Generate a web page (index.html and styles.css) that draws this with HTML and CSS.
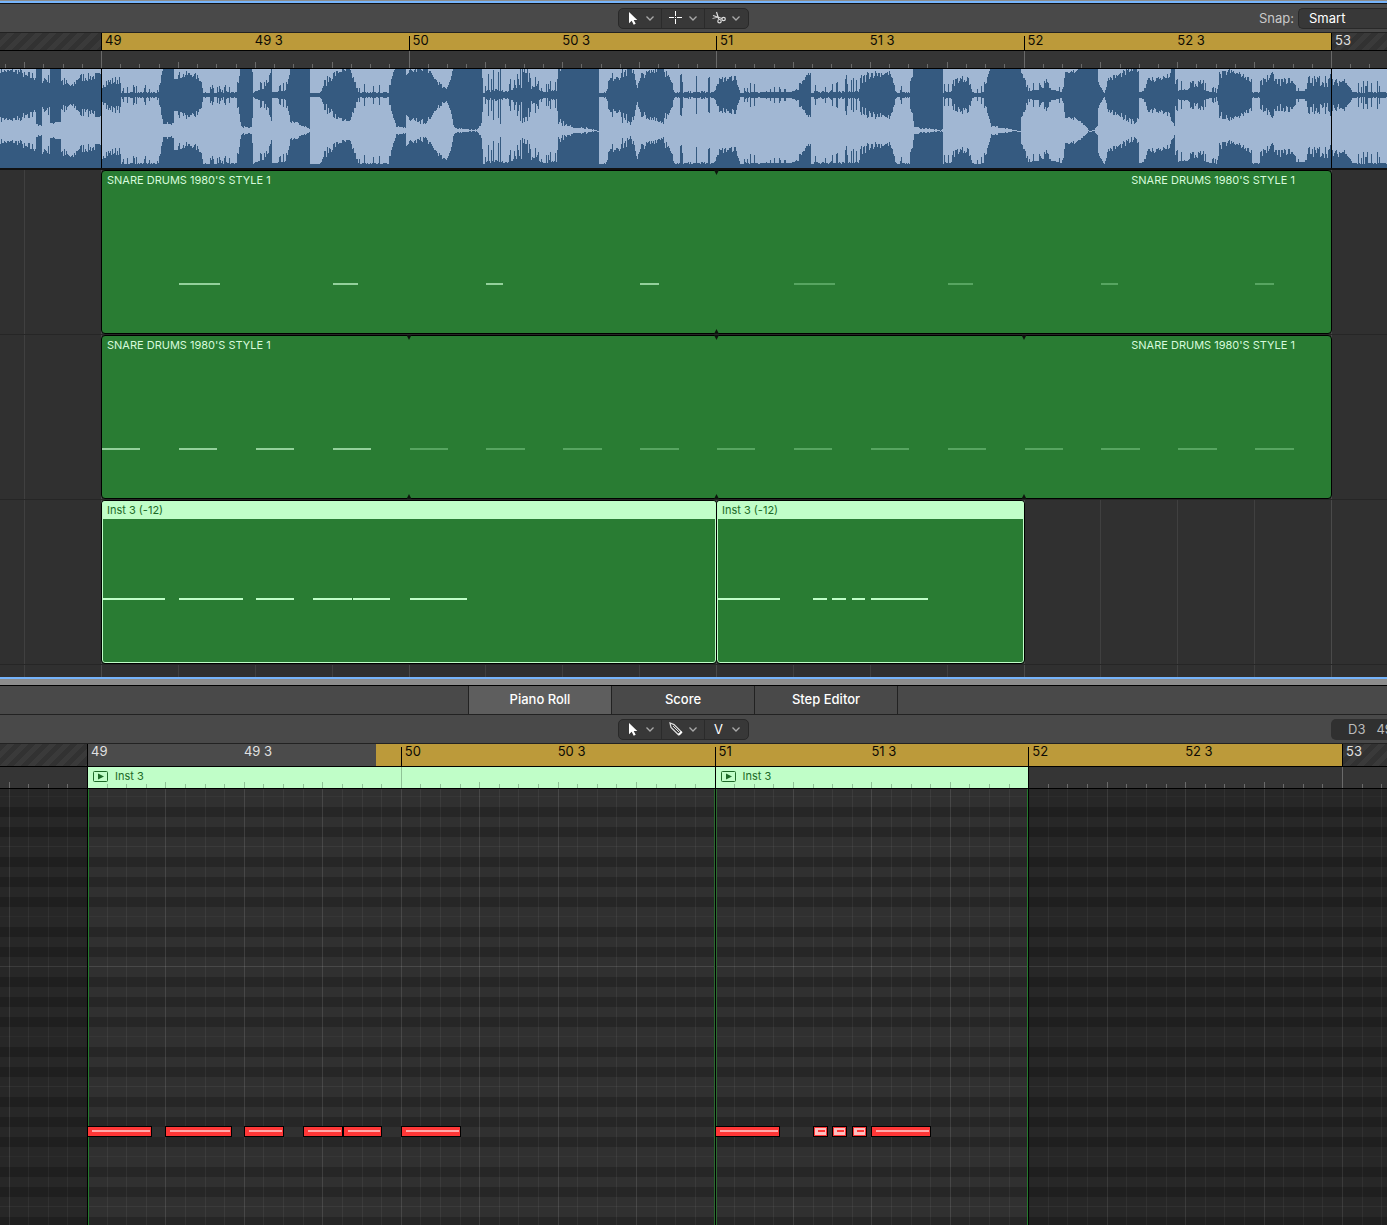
FILE: index.html
```html
<!DOCTYPE html>
<html lang="en">
<head>
<meta charset="utf-8">
<title>Tracks and Piano Roll</title>
<link rel="stylesheet" href="styles.css">
</head>
<body>
<svg class="defs" aria-hidden="true">
  <symbol id="pointer" viewBox="0 0 16 16"><path fill="#fff" d="M4 2v11.2l2.7-2.5 2 4 2-1-2-3.8h3.6z"/></symbol>
  <symbol id="marquee" viewBox="0 0 16 16"><path stroke="#fff" d="M7.500 1v5M7.500 9v5M1 7.500h5M9 7.500h5M7 7.500h1"/></symbol>
  <symbol id="scissors" viewBox="0 0 16 16"><g fill="none" stroke="#ddd" stroke-width="1.200"><path d="M2 5.500l9 3M5.500 2l2.200 7"/><circle cx="12.600" cy="9" r="1.700"/><circle cx="8.500" cy="11.200" r="1.700"/><path d="M1.500 8.500l6-1.500" stroke-width=".8"/></g></symbol>
  <symbol id="pencil" viewBox="0 0 16 16"><path fill="none" stroke="#ddd" stroke-width="1.200" d="M2 2l1 4.500 7.500 7.300 3-2.800-7.500-7.400z"/><path stroke="#ddd" d="M5 5l6 6"/><path fill="#fff" d="M10 13l3-3 1.500 1.500-3 3z"/></symbol>
  <symbol id="chevron" viewBox="0 0 10 10"><path fill="none" stroke="#aaa" stroke-width="1.300" d="M1.500 3.500L5 7l3.500-3.500"/></symbol>
  <symbol id="midi" viewBox="0 0 15 11"><rect x=".5" y=".5" width="14" height="10" rx="1" fill="none" stroke="#1c6a27"/><path fill="#1c6a27" d="M5 2.500v6l6-3z"/></symbol>
</svg>
<div class="app">
  <section class="tracks" aria-label="Tracks">
    <div class="focus-line"></div>
    <header class="toolbar">
      <div class="tools">
        <button type="button" aria-label="Pointer tool"><svg class="icon"><use href="#pointer"/></svg><svg class="chev"><use href="#chevron"/></svg></button>
        <button type="button" aria-label="Marquee tool"><svg class="icon"><use href="#marquee"/></svg><svg class="chev"><use href="#chevron"/></svg></button>
        <button type="button" aria-label="Scissors tool"><svg class="icon"><use href="#scissors"/></svg><svg class="chev"><use href="#chevron"/></svg></button>
      </div>
      <div class="snap"><label for="snap">Snap:</label><select id="snap"><option>Smart</option></select></div>
    </header>
    <div class="ruler">
      <div class="cycle" style="--at:0;--len:16"></div>
      <span class="bar first" style="--at:0">49</span><span class="half" style="--at:2">49 3</span>
      <span class="bar" style="--at:4">50</span><span class="half" style="--at:6">50 3</span>
      <span class="bar" style="--at:8">51</span><span class="half" style="--at:10">51 3</span>
      <span class="bar" style="--at:12">52</span><span class="half" style="--at:14">52 3</span>
      <span class="bar first out" style="--at:16">53</span>
    </div>
    <div class="ticks"><svg class="fill" data-draw="ticks"></svg></div>
    <div class="audio"><svg class="fill" data-draw="wave"></svg>
      <i class="cut" style="--at:0"></i><i class="cut" style="--at:16"></i></div>
    <div class="lanes">
      <svg class="fill" data-draw="grid"></svg>
      <div class="lane">
        <div class="region" style="--at:0;--len:16">
          <div class="names"><span>SNARE DRUMS 1980'S STYLE 1</span><span>SNARE DRUMS 1980'S STYLE 1</span></div>
        </div>
        <i class="seam" style="--at:8"></i>
        <div class="notes" data-notes="claps"></div>
      </div>
      <div class="lane">
        <div class="region" style="--at:0;--len:16">
          <div class="names"><span>SNARE DRUMS 1980'S STYLE 1</span><span>SNARE DRUMS 1980'S STYLE 1</span></div>
        </div>
        <i class="seam" style="--at:4"></i><i class="seam" style="--at:8"></i><i class="seam" style="--at:12"></i>
        <div class="notes" data-notes="beats"></div>
      </div>
      <div class="lane melody">
        <div class="region selected" style="--at:0;--len:8"><div class="names"><span>Inst 3 (-12)</span></div></div>
        <div class="region selected" style="--at:8;--len:4"><div class="names"><span>Inst 3 (-12)</span></div></div>
        <div class="notes" data-notes="melody"></div>
      </div>
      <div class="lane rest"></div>
    </div>
  </section>
  <section class="editor" aria-label="Editor">
    <div class="divider"></div>
    <nav class="tabs">
      <button type="button" class="active">Piano Roll</button><button type="button">Score</button><button type="button">Step Editor</button>
    </nav>
    <header class="toolbar">
      <div class="tools">
        <button type="button" aria-label="Pointer tool"><svg class="icon"><use href="#pointer"/></svg><svg class="chev"><use href="#chevron"/></svg></button>
        <button type="button" aria-label="Pencil tool"><svg class="icon"><use href="#pencil"/></svg><svg class="chev"><use href="#chevron"/></svg></button>
        <button type="button" aria-label="Velocity tool"><span class="icon">V</span><svg class="chev"><use href="#chevron"/></svg></button>
      </div>
      <output class="position"><span>D3</span><span>49</span></output>
    </header>
    <div class="ruler">
      <div class="idle" style="--at:0;--len:4"></div>
      <div class="cycle" style="--at:3.69;--len:12.31"></div>
      <span class="bar first out" style="--at:0">49</span><span class="half out" style="--at:2">49 3</span>
      <span class="bar" style="--at:4">50</span><span class="half" style="--at:6">50 3</span>
      <span class="bar" style="--at:8">51</span><span class="half" style="--at:10">51 3</span>
      <span class="bar" style="--at:12">52</span><span class="half" style="--at:14">52 3</span>
      <span class="bar first out" style="--at:16">53</span>
    </div>
    <div class="ticks">
      <div class="clip" style="--at:0;--len:8"><svg class="midi"><use href="#midi"/></svg>Inst 3</div>
      <div class="clip" style="--at:8;--len:4"><svg class="midi"><use href="#midi"/></svg>Inst 3</div>
      <svg class="fill" data-draw="ticks"></svg>
    </div>
    <div class="roll">
      <svg class="fill" data-draw="grid"></svg>
      <div class="shade before"></div>
      <div class="shade after" style="--at:12"></div>
      <i class="edge start" style="--at:0"></i><i class="edge both" style="--at:8"></i><i class="edge end" style="--at:12"></i>
      <div class="notes" data-notes="roll"></div>
    </div>
  </section>
</div>
<script src="script.js"></script>
</body>
</html>
```
FILE: styles.css
```css
* { box-sizing: border-box; }

body {
  margin: 0;
  background: #303030;
  color: #fff;
  font-family: Inter, "Liberation Sans", sans-serif;
  font-size: 13px;
}

button, select { font: inherit; color: inherit; margin: 0; }

.defs { display: none; }

.app {
  display: flex;
  flex-direction: column;
  min-height: 100vh;
  overflow: hidden;
}

.tracks { --origin: 101px; --span: 1230px; }
.editor { --origin: 87px; --span: 1255px; flex: 1; display: flex; flex-direction: column; }

.focus-line {
  height: 4px;
  background: linear-gradient(#8c8c8c 1px, #76b4fb 1px 3px, #111 3px);
}

.toolbar {
  display: grid;
  grid-template-columns: 1fr auto 1fr;
  align-items: center;
  height: 29px;
  padding-right: 21px;
  background: #494949;
  border-bottom: 1px solid #222;
}

.tools {
  grid-column: 2;
  display: flex;
  height: 21px;
  background: #383838;
  border: 1px solid #292929;
  border-radius: 5px;
}

.tools button {
  display: flex;
  align-items: center;
  gap: 4px;
  width: 43px;
  padding: 0 0 0 6px;
  background: none;
  border: 0;
  border-right: 1px solid #2b2b2b;
}
.tools button:last-child { border-right: 0; }
.icon { width: 16px; height: 16px; line-height: 16px; }
.chev { width: 10px; height: 10px; }

.snap {
  display: flex;
  align-items: center;
  justify-self: end;
  gap: 4px;
  margin-right: -21px;
  color: #c8c8c8;
}

.snap select {
  appearance: none;
  width: 89px;
  height: 21px;
  padding: 0 10px;
  background: #383838;
  border: 1px solid #292929;
  border-right: 0;
  border-radius: 5px 0 0 5px;
  color: #fff;
}

.position {
  display: flex;
  align-items: center;
  gap: 11px;
  justify-self: end;
  width: 56px;
  height: 21px;
  margin-right: -21px;
  padding-left: 17px;
  overflow: hidden;
  background: #303030;
  border-radius: 5px 0 0 5px;
  color: #bbb;
}

/* Everything on a timeline is placed by its beat; sixteen beats fill the span. */
.cycle, .idle, .bar, .half, .cut, .region, .seam, .clip, .edge, .note {
  position: absolute;
  left: calc(var(--origin) + var(--at) * var(--span) / 16);
}
.cycle, .idle, .region, .clip, .note { width: calc(var(--len) * var(--span) / 16); }

.fill { position: absolute; inset: 0; width: 100%; height: 100%; shape-rendering: crispEdges; }

.ruler {
  position: relative;
  height: 18px;
  background: repeating-linear-gradient(135deg, #323232 0 5px, #3a3a3a 5px 10px);
  border-bottom: 1px solid #000;
}
.editor .ruler { height: 23px; }
.cycle { top: 0; bottom: 0; background: #bc9a3a; }
.idle { top: 0; bottom: 0; background: #4b4b4b; }
.bar, .half { top: 3px; bottom: 0; color: #0c0a04; line-height: 9px; white-space: pre; }
.bar { padding-left: 3px; border-left: 1px solid #000; }
.first { top: 0; padding-top: 3px; }
.out { color: #e0e0e0; }

.ticks {
  position: relative;
  height: 18px;
  background: #353535;
  border-bottom: 1px solid #000;
}
.editor .ticks { height: 22px; }

.clip {
  top: 0;
  bottom: 0;
  display: flex;
  align-items: center;
  gap: 7px;
  padding: 0 0 3px 5px;
  background: #c0fec8;
  border-left: 1px solid #000;
  color: #1c6a27;
  font-size: 11px;
}
.midi { width: 15px; height: 11px; }

.audio {
  position: relative;
  height: 101px;
  background: #355a80;
  border-bottom: 2px solid #111;
}
.cut { top: 0; bottom: 0; width: 1px; background: #000; }

.lanes { position: relative; }
.lane {
  position: relative;
  height: 165px;
  border-bottom: 1px solid #262626;
}
.rest { height: 12px; border: 0; }

.region {
  top: 0;
  bottom: 0;
  width: calc(var(--len) * var(--span) / 16 + 1px);
  background: #297c33;
  border: 1px solid #000;
  border-radius: 4px;
  overflow: hidden;
}
.names {
  display: flex;
  justify-content: space-between;
  padding: 0 36px 0 5px;
  color: #d6fadb;
  font-size: 11px;
  line-height: 18px;
}
.selected { box-shadow: inset 0 0 0 1px #c0fec8; }
.selected .names { background: #c0fec8; color: #1c6a27; }

.seam { top: 0; bottom: 0; width: 1px; }
.seam::before, .seam::after {
  content: "";
  position: absolute;
  left: -2px;
  width: 5px;
  height: 5px;
  background: #0c140d;
}
.seam::before { top: 0; clip-path: polygon(0 0, 100% 0, 50% 100%); }
.seam::after { bottom: 0; clip-path: polygon(50% 0, 100% 100%, 0 100%); }

.lane .notes { position: absolute; inset: 0 0 0 1px; }
.lane .note { top: 113px; height: 2px; background: #93d09b; }
.lane .looped { background: #57a561; }
.melody .note { top: 98px; background: #c0fec8; }

.divider {
  height: 9px;
  background: linear-gradient(#76b4fb 2px, #8c8c8c 2px 8px, #000 8px);
}

.tabs {
  display: flex;
  justify-content: center;
  height: 29px;
  padding-right: 21px;
  background: #494949;
  border-bottom: 1px solid #222;
}
.tabs button {
  width: 143px;
  padding: 0 0 2px;
  background: none;
  border: 0;
  border-right: 1px solid #222;
  font-weight: 500;
}
.tabs .active { width: 144px; background: #5e5e5e; border-left: 1px solid #222; }

.roll {
  position: relative;
  flex: 1;
  min-height: 400px;
  overflow: hidden;
  background: linear-gradient(#303030 0 10px, #262626 10px 20px, #303030 20px 30px, #262626 30px 40px,
    #303030 40px 50px, #262626 50px 60px, #303030 60px 69px, #363636 69px 70px, #303030 70px 80px,
    #262626 80px 90px, #303030 90px 100px, #262626 100px 110px, #303030 110px 119px, #3a3a3a 119px 120px)
    0 58px / 100% 120px;
}
.roll::before {
  content: "";
  position: absolute;
  top: 177px;
  width: 100%;
  height: 1px;
  background: #484848;
}
.shade { position: absolute; top: 0; bottom: 0; background: rgb(0 0 0 / .17); }
.before { left: 0; width: var(--origin); }
.after { left: calc(var(--origin) + var(--at) * var(--span) / 16); right: 0; }

.edge { top: 0; bottom: 0; width: 1px; background: #000; }
.start { box-shadow: 1px 0 #247a2d; }
.both { box-shadow: 1px 0 #2a6a30, -1px 0 #2a6a30; }
.end { box-shadow: -1px 0 #247a2d; }

.roll .note {
  top: 337px;
  height: 11px;
  width: calc(var(--len) * var(--span) / 16 + 1px);
  background: linear-gradient(#ffa9a9, #ffa9a9) 4px 3px / calc(100% - 5px) 2px no-repeat #ff3737;
  border: 1px solid #000;
}
.roll .soft {
  background: linear-gradient(#ff3737, #ff3737) 4px 3px / 7px 2px no-repeat #fbc0c0;
  box-shadow: inset 0 0 0 1px #ff3737;
}
```
FILE: script.js
```js
// Notes as [first beat, length in beats, class name]
const melody = [[0, .82], [1, .83], [2, .5], [2.75, .5], [3.26, .49], [4, .75],
  [8, .82], [9.25, .18, 'soft'], [9.5, .18, 'soft'], [9.75, .18, 'soft'], [10, .75]];
const claps = [[1, .53], [3, .33], [5, .22], [7, .25]];
const notes = {
  claps: [...claps, ...claps.map(([at, len]) => [at + 8, len, 'looped'])],
  beats: Array.from({ length: 16 }, (_, i) => [i, .5, i < 4 ? '' : 'looped']),
  melody,
  roll: melody
};

document.querySelectorAll('[data-notes]').forEach(box => {
  for (const [at, len, kind] of notes[box.dataset.notes]) {
    const note = document.createElement('i');
    note.className = 'note ' + (kind || '');
    note.style.setProperty('--at', at);
    note.style.setProperty('--len', len);
    box.append(note);
  }
});

// Loudness outline: [x, level, extra height of the occasional peaks]
const outline = [[0,21,5],[22,20,5],[23,10,13],[35,13,10],[36,27,3],[41,27,3],[42,10,10],[49,10,10],[50,26,2],[60,25,3],
  [61,7,12],[72,4,6],[78,12,9],[100,14,8],[102,6,10],[119,10,8],[121,1,8],[158,1,9],[161,16,4],[163,26,2],[173,27,2],
  [174,14,8],[192,17,6],[200,12,5],[203,1,8],[236,1,9],[239,12,9],[241,30,2],[251,31,1],[253,1,12],[265,5,12],[271,14,13],
  [272,1,8],[286,3,9],[290,24,4],[309,30,3],[310,1,1],[320,1,9],[330,12,10],[340,20,6],[349,20,6],[353,11,9],[358,2,1],
  [360,1,11],[388,1,14],[391,10,8],[394,22,3],[396,30,1],[405,31,1],[406,19,5],[420,22,6],[425,24,6],[432,16,4],
  [437,10,5],[442,5,4],[446,4,2],[450,13,2],[453,27,2],[455,32,1],[477,33,1],[481,27,2],[483,1,18],[495,3,32],[504,1,22],
  [520,6,23],[538,5,22],[541,1,8],[556,3,14],[558,21,9],[568,28,2],[575,32,1],[585,31,2],[598,35,0],[599,1,1],
  [605,1,10],[612,12,10],[622,15,12],[633,20,10],[637,4,4],[641,15,7],[650,19,6],[663,26,4],[666,12,14],[675,1,4],[677,1,20],
  [714,1,18],[717,9,6],[723,12,6],[735,13,6],[740,1,1],[750,1,14],[790,2,3],[798,4,7],[804,7,8],[805,16,4],[810,19,2],
  [811,1,1],[814,1,22],[858,1,22],[862,9,11],[870,16,9],[890,18,5],[895,3,3],[897,1,8],[909,1,10],[912,16,3],[914,30,1],
  [920,32,1],[942,33,2],[943,1,9],[951,2,12],[955,10,7],[967,12,8],[972,2,2],[975,1,2],[983,1,12],[988,13,7],[991,29,2],
  [1000,31,1],[1020,35,0],[1021,19,5],[1025,9,7],[1028,3,5],[1032,3,12],[1045,5,11],[1062,2,4],[1065,14,8],[1075,21,5],
  [1086,30,1],[1088,34,1],[1094,34,1],[1097,28,3],[1098,8,9],[1104,1,2],[1108,12,6],[1120,16,6],[1130,20,8],[1138,21,8],
  [1139,1,2],[1143,3,5],[1148,11,6],[1168,14,6],[1174,29,1],[1175,7,14],[1178,3,12],[1200,5,10],[1211,1,12],[1216,1,4],
  [1219,12,10],[1228,20,6],[1240,17,5],[1250,12,5],[1252,1,14],[1259,1,10],[1263,11,8],[1273,14,8],[1276,7,9],[1291,11,6],
  [1296,3,6],[1303,2,18],[1315,8,11],[1331,7,14],[1335,7,8],[1345,11,5],[1352,2,3],[1356,1,13],[1387,1,13]];

function waveHeights(width) {
  let seed = 7, k = 0;
  const random = () => (seed = seed * 16807 % 2147483647) / 2147483647;
  return Array.from({ length: width }, (_, x) => {
    const px = x % 1387;
    if (px === 0) k = 0;
    while (k < outline.length - 2 && outline[k + 1][0] <= px) k++;
    const [x0, l0, p0] = outline[k], [x1, l1, p1] = outline[k + 1];
    const t = (px - x0) / (x1 - x0);
    const level = l0 + (l1 - l0) * t, peak = p0 + (p1 - p0) * t;
    // quiet passages carry sparse spikes, loud ones a ragged edge
    const hit = level < 4 ? (random() > .72 ? random() : random() * .1) : random();
    return Math.round(level + peak * hit);
  });
}

const rect = (x, y, w, h, fill) => `<rect x="${x}" y="${y}" width="${w}" height="${h}" fill="${fill}"/>`;

function drawWave(width) {
  const light = '#a1b7d3';
  return waveHeights(width).map((h, x) =>
    rect(x, 0, 1, Math.max(0, 25 - h), light) +
    rect(x, 27 + h, 1, Math.max(1, 69 - 2 * h), light)).join('');
}

function drawBeats(svg, width, height, kind) {
  const css = getComputedStyle(svg);
  const origin = parseInt(css.getPropertyValue('--origin'));
  const span = parseInt(css.getPropertyValue('--span'));
  const inEditor = !!svg.closest('.editor');
  let out = '';
  for (let i = -24; i < 400; i++) {
    const x = Math.round(origin + i * span / 64);
    if (x < 0 || x > width) continue;
    const onBar = i % 16 === 0, onBeat = i % 4 === 0;
    if (kind === 'ticks') {
      const green = inEditor && i >= 0 && i < 48;
      if (green && (i === 0 || i === 32)) continue;
      if (inEditor && i === 48) {
        out += rect(x, 0, 1, height, '#000');
        continue;
      }
      const h = onBar ? height : onBeat ? 6 : 4;
      out += rect(x, height - h, 1, h, green ? '#8fc397' : '#6a6a6a');
    } else if (inEditor) {
      out += rect(x, 0, 1, height, onBeat ? '#ffffff1d' : '#ffffff0e');
    } else if (onBeat) {
      out += rect(x, 0, 1, height, onBar ? '#4a4a4a' : '#404040');
    }
  }
  return out;
}

function draw() {
  document.querySelectorAll('[data-draw]').forEach(svg => {
    const { width, height } = svg.getBoundingClientRect();
    const kind = svg.dataset.draw;
    svg.innerHTML = kind === 'wave' ? drawWave(Math.ceil(width)) : drawBeats(svg, width, Math.round(height), kind);
  });
}

draw();
addEventListener('resize', draw);
```
